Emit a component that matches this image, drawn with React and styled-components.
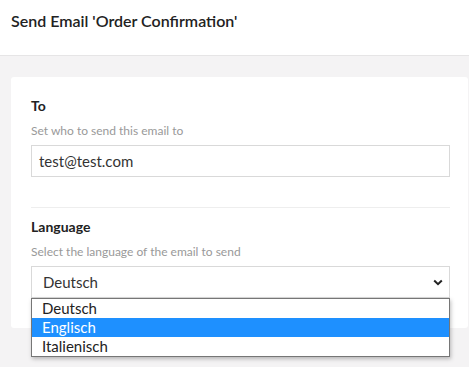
import styled, { createGlobalStyle } from "styled-components";

const GlobalStyle = createGlobalStyle`
  html, body {
    margin: 0;
    padding: 0;
    background: #f4f3f4;
    font-family: Lato, "Open Sans", Arial, sans-serif;
    color: #222;
  }
`;

const Page = styled.div`
  width: 469px;
  height: 367px;
  overflow: hidden;
  background: #f4f3f4;
`;

const Header = styled.header`
  height: 56px;
  box-sizing: border-box;
  padding: 0 11px;
  display: flex;
  align-items: center;
  padding-bottom: 14px;
  background: #fff;
  border-bottom: 1px solid #e6e5e6;

  h1 {
    margin: 0;
    font-size: 16px;
    font-weight: 600;
    color: #222;
  }
`;

const Body = styled.main`
  padding: 21px 1px 0 11px;
`;

const Card = styled.section`
  background: #fff;
  border-radius: 3px;
  padding: 20px 18px 0 20px;
  height: 251px;
  box-sizing: border-box;
`;

const Field = styled.div`
  display: flex;
  flex-direction: column;
  position: relative;
  padding-bottom: ${({ $last }) => ($last ? "0" : "30px")};
  margin-bottom: ${({ $last }) => ($last ? "0" : "10px")};
  border-bottom: ${({ $last }) => ($last ? "none" : "1px solid #eeeeee")};
`;

const Label = styled.label`
  font-size: 14px;
  font-weight: 700;
  color: #222;
  line-height: 18px;
`;

const Hint = styled.span`
  margin-top: 8px;
  font-size: 12px;
  color: #999;
  line-height: 15px;
`;

const TextBox = styled.div`
  margin-top: 7px;
  height: 32px;
  box-sizing: border-box;
  border: 1px solid #d9d9d9;
  padding: 0 7px;
  display: flex;
  align-items: center;
  font-size: 15px;
  color: #333;
`;

const SelectBox = styled(TextBox)`
  padding: 0 6px 0 11px;
  justify-content: space-between;
`;

const SelectWrap = styled.div`
  position: relative;
`;

const Menu = styled.ul`
  position: absolute;
  left: 0;
  right: 0;
  top: 100%;
  margin: 0;
  padding: 0;
  list-style: none;
  background: #fff;
  border: 1px solid #767676;
  box-shadow: 1px 2px 4px rgba(0, 0, 0, 0.25);
  z-index: 2;
`;

const Option = styled.li`
  height: 19px;
  line-height: 18px;
  padding: 0 10px;
  font-size: 15px;
  color: ${({ $active }) => ($active ? "#fff" : "#222")};
  background: ${({ $active }) => ($active ? "#1e90ff" : "transparent")};
`;

const Chevron = () => (
  <svg width="10" height="7" viewBox="0 0 10 7">
    <path d="M1.2 1.5 L5 5.2 L8.8 1.5" fill="none" stroke="#222" strokeWidth="2" />
  </svg>
);

export default function App() {
  const languages = ["Deutsch", "Englisch", "Italienisch"];
  return (
    <Page>
      <GlobalStyle />
      <Header>
        <h1>Send Email 'Order Confirmation'</h1>
      </Header>
      <Body>
        <Card>
          <Field>
            <Label>To</Label>
            <Hint>Set who to send this email to</Hint>
            <TextBox>test@test.com</TextBox>
          </Field>
          <Field $last>
            <Label>Language</Label>
            <Hint>Select the language of the email to send</Hint>
            <SelectWrap>
              <SelectBox>
                <span>Deutsch</span>
                <Chevron />
              </SelectBox>
              <Menu>
                {languages.map((l) => (
                  <Option key={l} $active={l === "Englisch"}>
                    {l}
                  </Option>
                ))}
              </Menu>
            </SelectWrap>
          </Field>
        </Card>
      </Body>
    </Page>
  );
}
